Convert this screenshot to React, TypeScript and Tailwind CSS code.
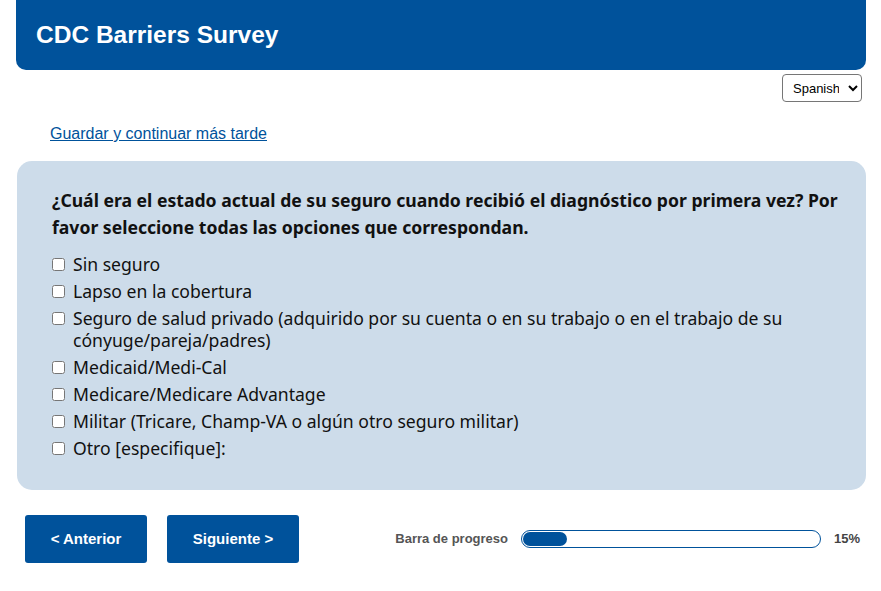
import React, { useState } from "react"

const options = [
	"Sin seguro",
	"Lapso en la cobertura",
	"Seguro de salud privado (adquirido por su cuenta o en su trabajo o en el trabajo de su cónyuge/pareja/padres)",
	"Medicaid/Medi-Cal",
	"Medicare/Medicare Advantage",
	"Militar (Tricare, Champ-VA o algún otro seguro militar)",
	"Otro [especifique]:",
]

function App() {
	const [checked, setChecked] = useState<string[]>([])
	const progress = 15

	const toggle = (opt: string) => {
		setChecked(checked.includes(opt) ? checked.filter((c) => c !== opt) : [...checked, opt])
	}

	return (
		<div className="min-h-screen bg-white font-['Liberation_Sans',Arial,sans-serif]">
			{/* Header */}
			<div className="ml-[16px] mr-[15px] h-[70px] rounded-b-[10px] bg-[#00529b] flex items-center pl-[20px]">
				<h1 className="text-[24.5px] font-bold text-white">CDC Barriers Survey</h1>
			</div>

			{/* Language */}
			<div className="flex justify-end pr-[19px] pt-[4px]">
				<select className="h-[28px] w-[80px] rounded-[4px] border border-[#767676] bg-white px-[6px] text-[13px] text-black">
					<option>Spanish</option>
					<option>English</option>
				</select>
			</div>

			<div className="pl-[50px] pt-[20px]">
				<a href="#" className="text-[16px] text-[#00529b] underline">
					Guardar y continuar más tarde
				</a>
			</div>

			{/* Question panel */}
			<div className="ml-[17px] mr-[15px] mt-[15px] h-[329px] rounded-[15px] bg-[#cddcea] pl-[35px] pr-[20px] pt-[26px] font-['Noto_Sans',sans-serif] text-[#111]">
				<p className="text-[17.6px] font-bold leading-[27px]">
					¿Cuál era el estado actual de su seguro cuando recibió el diagnóstico por primera vez? Por favor seleccione todas las opciones que correspondan.
				</p>
				<div className="mt-[12px] flex flex-col gap-[5px]">
					{options.map((opt) => (
						<label key={opt} className="flex items-start gap-[8px] text-[17.6px] leading-[22px]">
							<input
								type="checkbox"
								checked={checked.includes(opt)}
								onChange={() => toggle(opt)}
								className="mt-[5px] h-[13px] w-[13px] shrink-0"
							/>
							<span className="max-w-[760px]">{opt}</span>
						</label>
					))}
				</div>
			</div>

			{/* Footer nav */}
			<div className="flex items-center pl-[25px] pr-[21px] pt-[25px]">
				<button className="h-[48px] w-[122px] rounded-[3px] bg-[#00529b] text-[15px] font-bold text-white">
					&lt; Anterior
				</button>
				<button className="ml-[20px] h-[48px] w-[132px] rounded-[3px] bg-[#00529b] text-[15px] font-bold text-white">
					Siguiente &gt;
				</button>
				<div className="ml-auto flex items-center">
					<span className="text-[13px] font-bold text-[#555]">Barra de progreso</span>
					<div className="ml-[13px] h-[18px] w-[300px] rounded-full border border-[#00529b] bg-white p-[1px]">
						<div className="h-full rounded-full bg-[#00529b]" style={{ width: `${progress}%` }} />
					</div>
					<span className="ml-[13px] text-[13px] font-bold text-[#444]">{progress}%</span>
				</div>
			</div>
		</div>
	)
}

export default App
